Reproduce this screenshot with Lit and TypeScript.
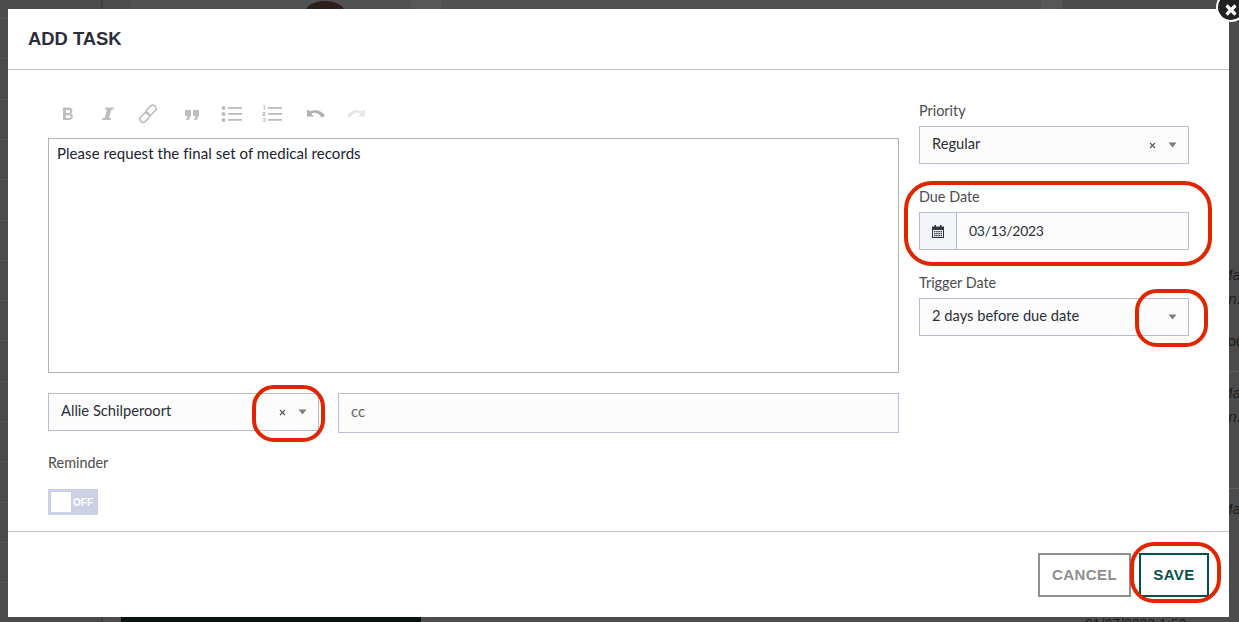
import { LitElement, html, css, svg } from "lit";
import { customElement } from "lit/decorators.js";

@customElement("app-root")
export class AppRoot extends LitElement {
  static styles = css`
    :host { display: block; width: 1239px; height: 622px; position: relative; overflow: hidden; background: #4d4c4c; font-family: "Lato", "Liberation Sans", sans-serif; color: #2b2e3a; }
    * { box-sizing: border-box; }
    .back { position: absolute; }
    .b0 { left: 0; top: 18px; width: 101px; height: 604px; background: repeating-linear-gradient(to bottom, #565555 0, #565555 1px, #4c4b4b 1px, #4c4b4b 40.3px); }
    .b1 { left: 101px; top: 0; width: 2px; height: 622px; background: #3f3e3e; }
    .b2 { left: 131px; top: 0; width: 280px; height: 9px; background: #525151; }
    .b6 { left: 411px; top: 0; width: 30px; height: 9px; background: #585757; }
    .b3 { left: 441px; top: 0; width: 600px; height: 9px; background: #525151; }
    .b7 { left: 1041px; top: 0; width: 21px; height: 9px; background: #585757; }
    .head { left: 306px; top: 1px; width: 38px; height: 20px; border-radius: 50%; background: #2b201c; }
    .b4 { left: 121px; top: 617px; width: 300px; height: 5px; background: #07140f; }
    .b5 { left: 1229px; top: 0; width: 10px; height: 622px; background: #4c4b4b; }
    .rt { left: 1220px; color: #1c1c1c; font: italic 15px "Liberation Sans", sans-serif; white-space: nowrap; }
    .date-line { left: 1085px; top: 616px; color: #1c1c1c; font: 14px "Liberation Sans", sans-serif; white-space: nowrap; }
    .rule { left: 1229px; width: 10px; height: 1px; background: #5f5e5e; }
    .stage { padding: 9px 10px 5px 8px; height: 622px; position: relative; }
    .modal { background: #fff; height: 608px; display: flex; flex-direction: column; }
    header { height: 61px; border-bottom: 1px solid #c4c4c4; padding: 19px 20px 0; font: bold 18.4px/21px "Liberation Sans", sans-serif; color: #2a2d3c; }
    .body { height: 462px; display: flex; gap: 20px; padding: 0 40px; border-bottom: 1px solid #c4c4c4; }
    .left { width: 851px; }
    .right { width: 270px; padding-top: 32px; }
    .toolbar { height: 68px; display: flex; align-items: center; padding: 19px 0 0 9px; }
    .toolbar svg { width: 22px; height: 22px; display: block; margin-right: 18px; flex: none; }
    .toolbar .gap { margin-left: 4px; }
    .editor { height: 235px; border: 1px solid #b4b4b4; padding: 5px 8px; font-size: 15px; line-height: 18px; color: #20222c; letter-spacing: 0.06px; }
    .row { display: flex; gap: 19px; margin-top: 20px; align-items: flex-start; }
    .select { display: flex; align-items: center; height: 38px; border: 1px solid #b5bcd3; background: #fcfcfc; padding: 0 12px; font-size: 14.7px; color: #2b2e3a; }
    .select .v { flex: 1; padding-bottom: 4px; }
    .x { width: 7px; display: flex; margin-right: 12px; }
    .x svg, .caret svg { display: block; }
    .caret { width: 9px; margin-right: -1px; display: flex; }
    .who { width: 271px; }
    .cc { flex: 1; height: 40px; border: 1px solid #b5bcd3; background: #fcfcfc; padding: 0 12px 4px; display: flex; align-items: center; font-size: 15px; color: #666; }
    label { display: block; font-size: 14.4px; line-height: 17px; color: #4c4c50; }
    .rem { margin-top: 21px; }
    .toggle { margin-top: 18px; width: 50px; height: 26px; background: #cbd0e4; padding: 3px; display: flex; align-items: center; gap: 2px; }
    .knob { width: 20px; height: 20px; background: #fff; }
    .off { font: bold 10px "Liberation Sans", sans-serif; color: #fff; }
    .field { margin-bottom: 24px; }
    .field label { margin-bottom: 7px; }
    .date { display: flex; height: 38px; border: 1px solid #b5bcd3; background: #fcfcfc; font-size: 13.4px; }
    .addon { width: 37px; background: #f4f5f8; border-right: 1px solid #b5bcd3; display: flex; align-items: center; justify-content: center; }
    .dv { padding: 0 12px 2px; display: flex; align-items: center; font-size: 14px; letter-spacing: -0.3px; }
    footer { flex: 1; display: flex; justify-content: flex-end; align-items: flex-start; gap: 8px; padding: 21px 20px 0 0; }
    button { height: 44px; background: #fff; font: bold 15px "Liberation Sans", sans-serif; letter-spacing: 0.45px; padding: 0 0 2px; }
    .cancel { width: 93px; border: 2px solid #8e8e8e; color: #8e8e8e; }
    .save { width: 70px; border: 2px solid #02524a; color: #02524a; }
    .ring { position: absolute; border: 4.5px solid #e02500; }
    .r1 { left: 904px; top: 181px; width: 308px; height: 85px; border-radius: 28px; }
    .r2 { left: 1135px; top: 289px; width: 73px; height: 58px; border-radius: 22px; }
    .r3 { left: 252px; top: 385px; width: 73px; height: 57px; border-radius: 22px; }
    .r4 { left: 1130px; top: 542px; width: 91px; height: 61px; border-radius: 24px; }
    .close { position: absolute; left: 1216px; top: -8px; width: 30px; height: 30px; border-radius: 50%; background: #222; border: 2px solid #fff; display: flex; align-items: center; justify-content: center; }
  `;

  private icon(paths: unknown, gap = false) {
    return html`<svg class=${gap ? "gap" : ""} viewBox="0 0 22 22" fill="none">${paths}</svg>`;
  }

  private caret() {
    return html`<span class="caret"><svg width="9" height="6" viewBox="0 0 9 6"><path d="M.5.5h8L4.500 5.500z" fill="#7d7d7d"/></svg></span>`;
  }

  private x() {
    return html`<span class="x"><svg width="7" height="7" viewBox="0 0 7 7"><path d="M1 1l5 5M6 1L1 6" stroke="#555" stroke-width="1.100"/></svg></span>`;
  }

  render() {
    const g = "#bdbdbd";
    return html`
      <div class="back b0"></div><div class="back b1"></div><div class="back b2"></div><div class="back b6"></div><div class="back b3"></div><div class="back b7"></div>
      <div class="back head"></div><div class="back b4"></div><div class="back b5"></div>
      <div class="back rule" style="top:371px"></div><div class="back rule" style="top:488px"></div>
      <div class="back rt" style="top:266px">Mark</div><div class="back rt" style="top:290px">on.</div>
      <div class="back rt" style="top:332px;font-style:normal">Tool</div>
      <div class="back rt" style="top:384px">Mark</div><div class="back rt" style="top:408px">on.</div>
      <div class="back rt" style="top:500px">Mark</div>
      <div class="back date-line">01/27/2023 1:50</div>
      <div class="stage">
        <div class="modal">
          <header>ADD TASK</header>
          <div class="body">
            <div class="left">
              <div class="toolbar">
                ${this.icon(svg`<path d="M6 4.500h6c3.600 0 4.600 5 1.600 6 3.600.8 3 6.500-1.600 6.500H6zM9 7v3h3c1.600 0 1.600-3 0-3zM9 12.300V15h3.300c2 0 2-2.700 0-2.700z" fill="${g}" fill-rule="evenodd"/>`)}
                ${this.icon(svg`<path d="M8.500 4.500h8.500l-.5 2h-2.200l-2.300 8.500h2l-.5 2H5l.5-2h2.200L10 6.500H8z" fill="${g}"/>`)}
                ${this.icon(svg`<g stroke="${g}" stroke-width="1.500"><rect x="11" y="1.500" width="6.500" height="11" rx="3.200" transform="rotate(45 14.200 7)"/><rect x="4.500" y="9" width="6.500" height="11" rx="3.200" transform="rotate(45 7.800 14.500)"/></g>`)}
                ${this.icon(svg`<path d="M4 7h6v5.500L7.500 17H5l1.500-4H4zM12 7h6v5.500L15.500 17H13l1.500-4H12z" fill="${g}"/>`, true)}
                ${this.icon(svg`<g fill="${g}"><circle cx="2.500" cy="5" r="2"/><circle cx="2.500" cy="11" r="2"/><circle cx="2.500" cy="17" r="2"/><rect x="7" y="4" width="14" height="1.800"/><rect x="7" y="10" width="14" height="1.800"/><rect x="7" y="16" width="14" height="1.800"/></g>`)}
                ${this.icon(svg`<g fill="${g}"><path d="M1.500 3l1.500-1h.8v5H2.700V3z"/><path d="M1.500 9h3v1L3 12h1.700v1H1.500v-1L3 10H1.500z"/><path d="M1.500 15h3v4h-3v-.8h2v-.9h-1.500v-.6h1.500v-.9h-2z"/><rect x="7" y="4" width="14" height="1.800"/><rect x="7" y="10" width="14" height="1.800"/><rect x="7" y="16" width="14" height="1.800"/></g>`)}
                ${this.icon(svg`<path d="M2 6.500v7h7l-2.800-2.700c3.500-2.300 8-1 10.800 4.200.6-1 1-1.500 3-2-2.500-5-9-7.500-14.500-4.700z" fill="#b0b0b0"/>`, true)}
                ${this.icon(svg`<path d="M20 6.500v7h-7l2.800-2.700c-3.500-2.300-8-1-10.800 4.200-.6-1-1-1.500-3-2 2.500-5 9-7.500 14.500-4.700z" fill="#e6e6e6"/>`)}
              </div>
              <div class="editor">Please request the final set of medical records</div>
              <div class="row">
                <div class="select who"><span class="v">Allie Schilperoort</span>${this.x()}${this.caret()}</div>
                <div class="cc">cc</div>
              </div>
              <label class="rem">Reminder</label>
              <div class="toggle"><span class="knob"></span><span class="off">OFF</span></div>
            </div>
            <div class="right">
              <div class="field">
                <label>Priority</label>
                <div class="select"><span class="v">Regular</span>${this.x()}${this.caret()}</div>
              </div>
              <div class="field">
                <label>Due Date</label>
                <div class="date">
                  <span class="addon"><svg width="12" height="13" viewBox="0 0 12 13"><path d="M2.500 0h1.500v1.500h4V0h1.500v1.500H12V13H0V1.500h2.500zM1 5v7h10V5z" fill="#33363f" fill-rule="evenodd"/><path d="M2 6h1.500v1.300H2zM4.200 6h1.500v1.300H4.200zM6.400 6h1.500v1.300H6.400zM8.600 6h1.500v1.300H8.600zM2 8h1.500v1.300H2zM4.200 8h1.500v1.300H4.200zM6.400 8h1.500v1.300H6.400zM8.600 8h1.500v1.300H8.600zM2 10h1.500v1.300H2zM4.200 10h1.500v1.300H4.200zM6.400 10h1.500v1.300H6.400zM8.600 10h1.500v1.300H8.600z" fill="#33363f"/></svg></span>
                  <span class="dv">03/13/2023</span>
                </div>
              </div>
              <div class="field">
                <label>Trigger Date</label>
                <div class="select"><span class="v">2 days before due date</span>${this.caret()}</div>
              </div>
            </div>
          </div>
          <footer>
            <button class="cancel">CANCEL</button>
            <button class="save">SAVE</button>
          </footer>
        </div>
      </div>
      <div class="ring r1"></div><div class="ring r2"></div><div class="ring r3"></div><div class="ring r4"></div>
      <div class="close"><svg width="14" height="14" viewBox="0 0 14 14" style="margin:6px 0 0 -1px"><path d="M2.500 2.500l9 9M11.500 2.500l-9 9" stroke="#fff" stroke-width="3.200"/></svg></div>
    `;
  }
}
